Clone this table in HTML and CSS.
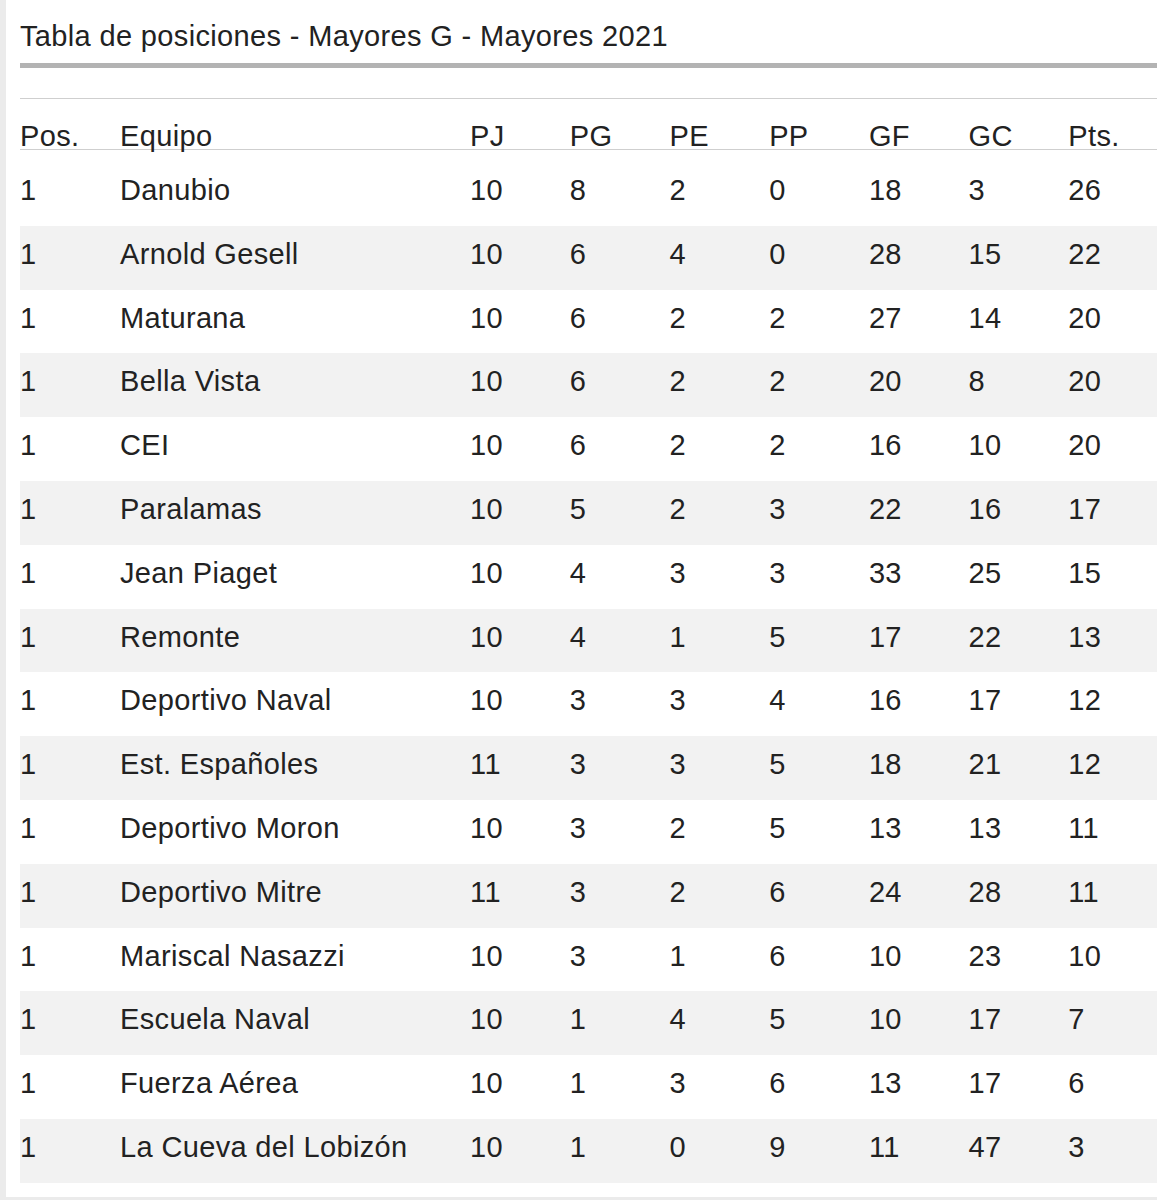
FILE: index.html
```html
<!DOCTYPE html>
<html lang="es">
<head>
<meta charset="utf-8">
<title>Tabla de posiciones - Mayores G - Mayores 2021</title>
<link rel="stylesheet" href="styles.css">
</head>
<body>
<div class="panel">
  <h1 class="title">Tabla de posiciones - Mayores G - Mayores 2021</h1>
  <div class="table-wrap">
    <table class="standings">
      <colgroup>
        <col class="c-pos"><col class="c-team"><col class="c-num"><col class="c-num"><col class="c-num"><col class="c-num"><col class="c-num"><col class="c-num"><col class="c-num">
      </colgroup>
      <thead>
        <tr><th>Pos.</th><th>Equipo</th><th>PJ</th><th>PG</th><th>PE</th><th>PP</th><th>GF</th><th>GC</th><th>Pts.</th></tr>
      </thead>
      <tbody>
        <tr><td>1</td><td>Danubio</td><td>10</td><td>8</td><td>2</td><td>0</td><td>18</td><td>3</td><td>26</td></tr>
        <tr><td>1</td><td>Arnold Gesell</td><td>10</td><td>6</td><td>4</td><td>0</td><td>28</td><td>15</td><td>22</td></tr>
        <tr><td>1</td><td>Maturana</td><td>10</td><td>6</td><td>2</td><td>2</td><td>27</td><td>14</td><td>20</td></tr>
        <tr><td>1</td><td>Bella Vista</td><td>10</td><td>6</td><td>2</td><td>2</td><td>20</td><td>8</td><td>20</td></tr>
        <tr><td>1</td><td>CEI</td><td>10</td><td>6</td><td>2</td><td>2</td><td>16</td><td>10</td><td>20</td></tr>
        <tr><td>1</td><td>Paralamas</td><td>10</td><td>5</td><td>2</td><td>3</td><td>22</td><td>16</td><td>17</td></tr>
        <tr><td>1</td><td>Jean Piaget</td><td>10</td><td>4</td><td>3</td><td>3</td><td>33</td><td>25</td><td>15</td></tr>
        <tr><td>1</td><td>Remonte</td><td>10</td><td>4</td><td>1</td><td>5</td><td>17</td><td>22</td><td>13</td></tr>
        <tr><td>1</td><td>Deportivo Naval</td><td>10</td><td>3</td><td>3</td><td>4</td><td>16</td><td>17</td><td>12</td></tr>
        <tr><td>1</td><td>Est. Españoles</td><td>11</td><td>3</td><td>3</td><td>5</td><td>18</td><td>21</td><td>12</td></tr>
        <tr><td>1</td><td>Deportivo Moron</td><td>10</td><td>3</td><td>2</td><td>5</td><td>13</td><td>13</td><td>11</td></tr>
        <tr><td>1</td><td>Deportivo Mitre</td><td>11</td><td>3</td><td>2</td><td>6</td><td>24</td><td>28</td><td>11</td></tr>
        <tr><td>1</td><td>Mariscal Nasazzi</td><td>10</td><td>3</td><td>1</td><td>6</td><td>10</td><td>23</td><td>10</td></tr>
        <tr><td>1</td><td>Escuela Naval</td><td>10</td><td>1</td><td>4</td><td>5</td><td>10</td><td>17</td><td>7</td></tr>
        <tr><td>1</td><td>Fuerza Aérea</td><td>10</td><td>1</td><td>3</td><td>6</td><td>13</td><td>17</td><td>6</td></tr>
        <tr><td>1</td><td>La Cueva del Lobizón</td><td>10</td><td>1</td><td>0</td><td>9</td><td>11</td><td>47</td><td>3</td></tr>
      </tbody>
    </table>
  </div>
</div>
</body>
</html>
```
FILE: styles.css
```css
html, body {
  margin: 0;
  padding: 0;
  background: #ebebeb;
  overflow: hidden;
}

body {
  font-family: "Liberation Sans", Arial, Helvetica, sans-serif;
  color: #222;
  letter-spacing: 0.35px;
}

.panel {
  margin-left: 6px;
  padding: 0 0 14px 14px;
  background: #fff;
  overflow: hidden;
}

.title {
  margin: 0;
  padding: 20px 0 11px;
  font-size: 29px;
  font-weight: normal;
  line-height: 32px;
  border-bottom: 5px solid #b3b3b3;
}

.table-wrap {
  margin-top: 30px;
  border-top: 1px solid #cfcfcf;
}

.standings {
  border-collapse: collapse;
  table-layout: fixed;
  width: 1148px;
  font-size: 29px;
}

.c-pos { width: 100px; }
.c-team { width: 350px; }
.c-num { width: 99.7px; }

.standings th {
  font-weight: normal;
  text-align: left;
  padding: 25px 0 0;
  line-height: 25px;
  border-bottom: 1px solid #cfcfcf;
  white-space: nowrap;
}

.standings td {
  text-align: left;
  padding: 14px 0 21.8px;
  line-height: 28px;
  white-space: nowrap;
}

.standings tbody tr:first-child td {
  padding-top: 26px;
}

.standings tbody tr:nth-child(even) td {
  background: #f2f2f2;
}
```
